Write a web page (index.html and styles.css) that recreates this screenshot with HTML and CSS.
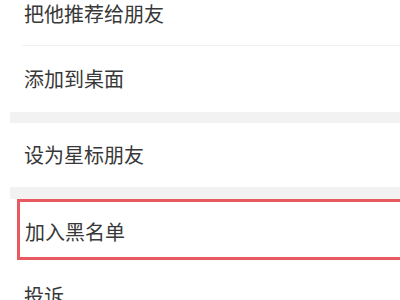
FILE: index.html
```
<!doctype html>
<html lang="zh-CN">
	<head>
		<meta charset="UTF-8">
		<title>资料设置</title>
		<link rel="stylesheet" href="styles.css">
	</head>
	<body>
		<div class="menu">
			<div class="item first">把他推荐给朋友</div>
			<div class="line"></div>
			<div class="item">添加到桌面</div>
			<div class="gap"></div>
			<div class="item third">设为星标朋友</div>
			<div class="gap gap2"></div>
			<div class="item mark">加入黑名单</div>
			<div class="item last">投诉</div>
		</div>
	</body>
</html>
```

FILE: styles.css
```
html,body{
	margin: 0;
	height: 100%;
	overflow: hidden;
	background-color: #fff;
}
.menu{
	display: flex;
	flex-direction: column;
	margin-left: 10px;
	margin-top: -17px;
	font-family: "Noto Sans CJK SC", "Noto Sans", sans-serif;
	font-size: 20px;
	color: #383838;
}
.item{
	display: flex;
	align-items: center;
	height: 66px;
	padding-left: 14px;
	line-height: 1;
	flex-shrink: 0;
}
.first{
	height: 62px;
}
.third{
	height: 64px;
}
.line{
	height: 1px;
	margin-left: 12px;
	background-color: #f1f1f1;
}
.gap{
	height: 11px;
	background-color: #f2f2f2;
}
.gap2{
	height: 12px;
}
.mark{
	height: 55px;
	margin-left: 7px;
	margin-right: -20px;
	padding-left: 5px;
	padding-top: 5px;
	box-sizing: content-box;
	height: 50px;
	border: 3px solid #e95a60;
}
.last{
	height: 72px;
}
```
